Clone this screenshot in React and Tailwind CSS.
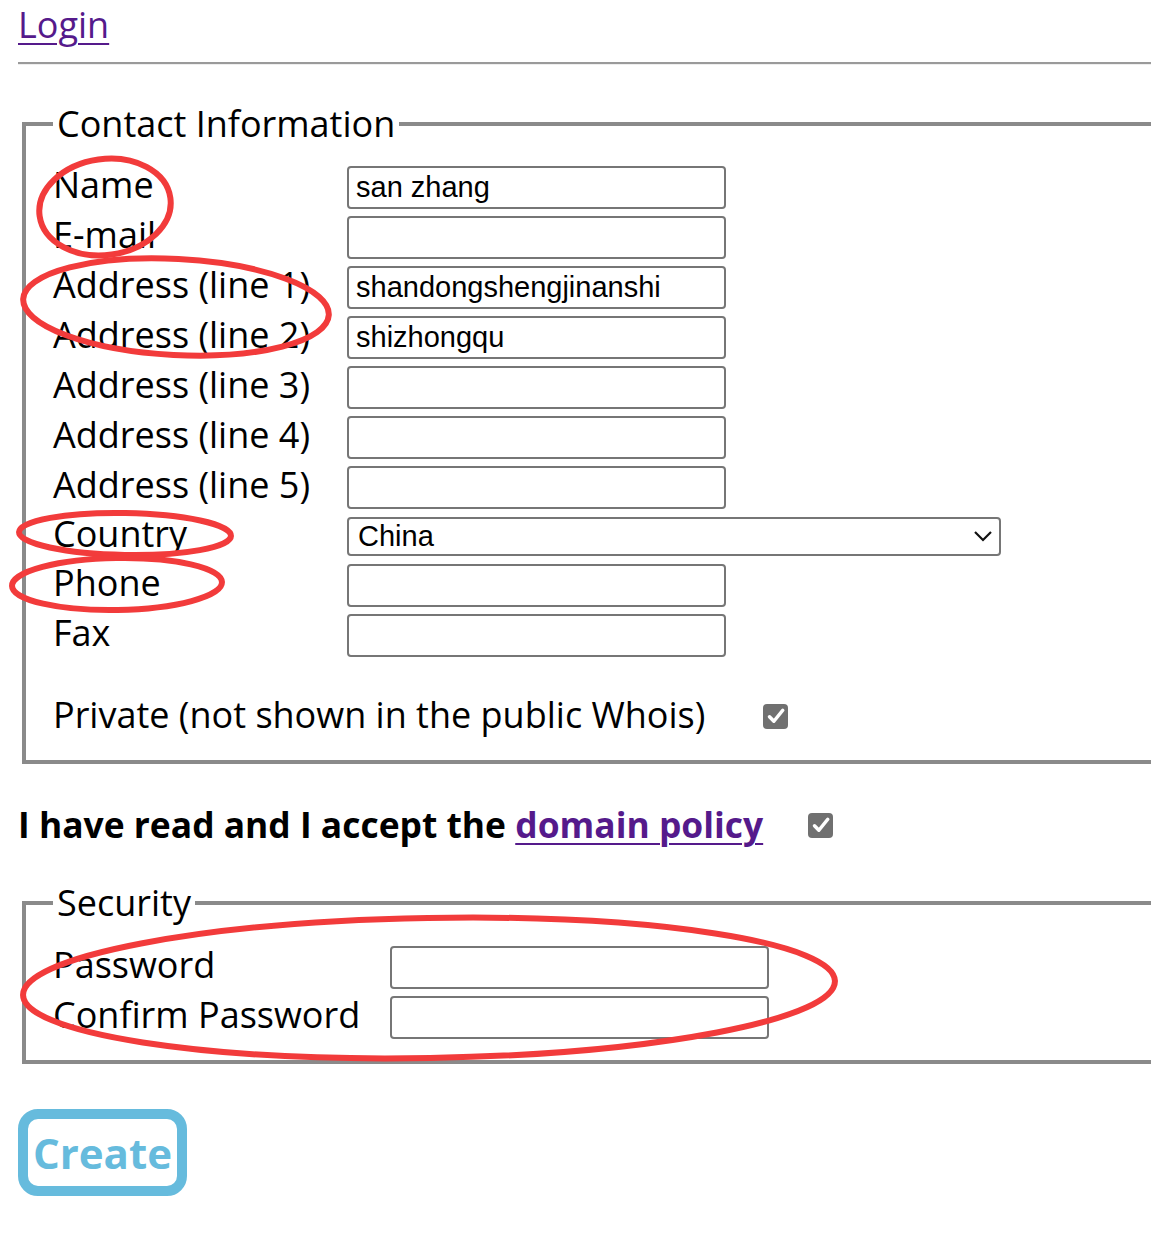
import React from "react";

const Check = () => (
  <div className="w-[25px] h-[25px] rounded-[4px] bg-[#707070] flex items-center justify-center">
    <svg width="20" height="20" viewBox="0 0 16 16" fill="none">
      <path d="M2.8 8.6 L6.3 12.2 L13.4 3.4" stroke="white" strokeWidth="2.8" strokeLinecap="round" strokeLinejoin="round" />
    </svg>
  </div>
);

const TextBox = ({ value = "" }) => (
  <div className="w-[379px] h-[43px] border-2 border-[#767676] rounded-[4px] bg-white flex items-center pl-[7px] font-['Liberation_Sans',Arial,sans-serif] text-[29px] text-black leading-none">
    {value}
  </div>
);

const Row = ({ label, children, labelW = "w-[294px]", h = "h-[50px]" }) => (
  <div className={`flex items-center ${h}`}>
    <div className={`${labelW} shrink-0 -mt-[4px]`}>{label}</div>
    {children}
  </div>
);

export default function App() {
  const contact = [
    ["Name", "san zhang"],
    ["E-mail", ""],
    ["Address (line 1)", "shandongshengjinanshi"],
    ["Address (line 2)", "shizhongqu"],
    ["Address (line 3)", ""],
    ["Address (line 4)", ""],
    ["Address (line 5)", ""],
  ];

  return (
    <div className="relative w-[1151px] h-[1246px] overflow-hidden bg-white text-black font-['Open_Sans','Noto_Sans',sans-serif] text-[36px] leading-[46px]">
      <div className="w-[1200px] pl-[18px] pt-[2px]">
        <a href="#" className="text-[#551a8b] underline underline-offset-[5px] decoration-2">Login</a>
        <div className="mt-[14px] h-[3px] border-t-2 border-[#9a9a9a] bg-[#eeeeee]" />

        {/* Contact */}
        <fieldset className="mt-[36px] ml-[4px] border-4 border-[#8a8a8a] pl-[27px] pb-[19px]">
          <legend className="px-[4px] leading-[46px]">Contact Information</legend>
          <div className="pt-[15px]">
            {contact.map(([label, value]) => (
              <Row key={label} label={label}>
                <TextBox value={value} />
              </Row>
            ))}
            <Row label="Country" h="h-[48px]">
              <div className="w-[654px] h-[39px] border-2 border-[#767676] rounded-[4px] flex items-center justify-between pl-[9px] pr-[6px] font-['Liberation_Sans',Arial,sans-serif] text-[29px] leading-none">
                <span>China</span>
                <svg width="20" height="12" viewBox="0 0 20 12" fill="none">
                  <path d="M2 2 L10 10 L18 2" stroke="#111" strokeWidth="2.2" />
                </svg>
              </div>
            </Row>
            <Row label="Phone">
              <TextBox />
            </Row>
            <Row label="Fax">
              <TextBox />
            </Row>
            <div className="mt-[31px] h-[50px] flex items-center gap-[58px]">
              <span className="-mt-[2px]">Private (not shown in the public Whois)</span>
              <Check />
            </div>
          </div>
        </fieldset>

        <div className="mt-[36px] h-[50px] flex items-center gap-[45px] font-bold text-[35.4px]">
          <span className="-mt-[2px]">
            I have read and I accept the{" "}
            <a href="#" className="text-[#551a8b] underline underline-offset-[5px] decoration-2">domain policy</a>
          </span>
          <Check />
        </div>

        {/* Security */}
        <fieldset className="mt-[30px] ml-[4px] border-4 border-[#8a8a8a] pl-[27px] pb-[18px]">
          <legend className="px-[4px] leading-[46px]">Security</legend>
          <div className="pt-[16px]">
            <Row label="Password" labelW="w-[337px]">
              <TextBox />
            </Row>
            <Row label="Confirm Password" labelW="w-[337px]">
              <TextBox />
            </Row>
          </div>
        </fieldset>

        <button className="mt-[45px] w-[169px] h-[87px] border-[10px] border-[#66bbdd] rounded-[20px] bg-white text-[#66bbdd] font-bold text-[42px] leading-none flex items-center justify-center">
          Create
        </button>
      </div>

      {/* red annotation ellipses */}
      <svg className="absolute inset-0 pointer-events-none" width="1151" height="1246" fill="none" stroke="#f23b3b" strokeWidth="6">
        <ellipse cx="105" cy="207" rx="66" ry="48" transform="rotate(-8 105 207)" />
        <ellipse cx="176" cy="307" rx="153" ry="48" transform="rotate(3 176 307)" />
        <ellipse cx="125" cy="534" rx="106" ry="21" transform="rotate(1 125 534)" />
        <ellipse cx="117" cy="584" rx="105" ry="26" transform="rotate(-1 117 584)" />
        <ellipse cx="429" cy="988" rx="406" ry="70" transform="rotate(-1 429 988)" />
      </svg>
    </div>
  );
}
